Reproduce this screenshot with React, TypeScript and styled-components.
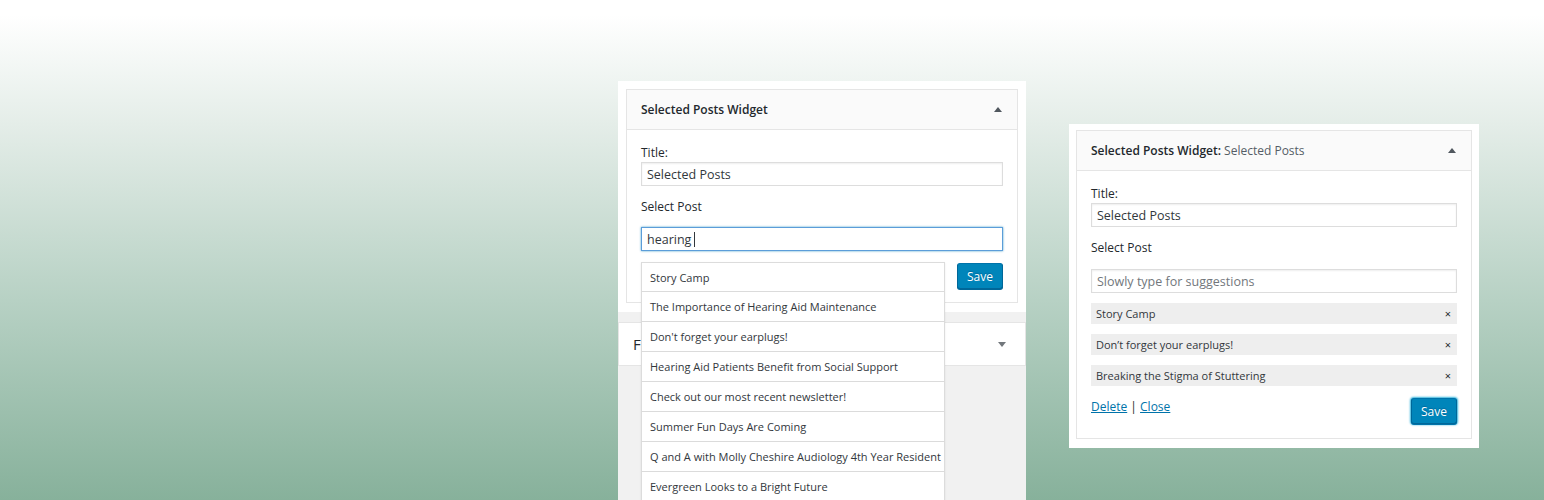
import React from "react";
import styled, { createGlobalStyle } from "styled-components";

const GlobalStyle = createGlobalStyle`
  html, body {
    margin: 0;
    padding: 0;
  }
  body {
    font-family: "Open Sans", "Liberation Sans", sans-serif;
    color: #23282d;
  }
`;

const Page = styled.div`
  width: 1544px;
  height: 500px;
  overflow: hidden;
  display: flex;
  align-items: flex-start;
  padding-left: 618px;
  box-sizing: border-box;
  background: linear-gradient(to bottom, #ffffff 3%, #e4ede8 25%, #b7d1c4 60%, #87b19b 100%);
`;

const LeftColumn = styled.div`
  width: 408px;
  height: 419px;
  margin-top: 81px;
  background: #f1f1f1;
  display: flex;
  flex-direction: column;
  flex-shrink: 0;
`;

const Holder = styled.div<{ $pad: string }>`
  background: #fff;
  padding: ${(p) => p.$pad};
  box-sizing: border-box;
`;

const RightHolder = styled(Holder)`
  width: 410px;
  margin-left: 43px;
  margin-top: 124px;
  flex-shrink: 0;
`;

const Widget = styled.div`
  border: 1px solid #e5e5e5;
  background: #fff;
`;

const Header = styled.div`
  height: 39px;
  background: #fafafa;
  border-bottom: 1px solid #e5e5e5;
  display: flex;
  align-items: center;
  justify-content: space-between;
  padding: 0 15px 0 14px;
`;

const HeaderTitle = styled.div`
  font-size: 12px;
  font-weight: 600;
  color: #23282d;
`;

const HeaderSub = styled.span`
  font-weight: 400;
  color: #555d66;
`;

const Arrow = styled.span<{ $down?: boolean }>`
  width: 0;
  height: 0;
  border-left: 4px solid transparent;
  border-right: 4px solid transparent;
  ${(p) => (p.$down ? "border-top: 5px solid #72777c;" : "border-bottom: 5px solid #50575e;")}
`;

const Body = styled.div<{ $pb: number }>`
  padding: 14px 14px ${(p) => p.$pb}px 14px;
  display: flex;
  flex-direction: column;
`;

const Label = styled.div<{ $mt?: number }>`
  font-size: 12px;
  line-height: 18px;
  color: #23282d;
  margin-top: ${(p) => p.$mt ?? 0}px;
`;

const Field = styled.div<{ $focus?: boolean; $mt?: number; $placeholder?: boolean }>`
  height: 24px;
  box-sizing: border-box;
  margin-top: ${(p) => p.$mt ?? 0}px;
  padding: 0 5px;
  display: flex;
  align-items: center;
  font-size: 12.5px;
  color: ${(p) => (p.$placeholder ? "#72777c" : "#32373c")};
  background: #fff;
  border: 1px solid ${(p) => (p.$focus ? "#5b9dd9" : "#ddd")};
  box-shadow: ${(p) =>
    p.$focus ? "0 0 2px rgba(30, 140, 190, 0.8)" : "inset 0 1px 2px rgba(0, 0, 0, 0.07)"};
`;

const Caret = styled.span`
  display: inline-block;
  width: 1px;
  height: 15px;
  background: #32373c;
  margin-left: 3px;
`;

const ActionRow = styled.div<{ $mt: number }>`
  margin-top: ${(p) => p.$mt}px;
  display: flex;
  justify-content: space-between;
  align-items: flex-start;
`;

const SuggestAnchor = styled.div`
  position: relative;
  width: 304px;
`;

const Suggestions = styled.ul`
  position: absolute;
  top: 0;
  left: 0;
  width: 304px;
  margin: 0;
  padding: 0;
  list-style: none;
  z-index: 5;
`;

const Suggestion = styled.li`
  height: 30px;
  box-sizing: border-box;
  padding: 0 8px;
  display: flex;
  align-items: center;
  white-space: nowrap;
  font-size: 11px;
  color: #32373c;
  background: #fff;
  border: 1px solid #dcdcdc;
  border-top: none;
  box-shadow: 0 1px 2px rgba(0, 0, 0, 0.08);
  &:first-child {
    border-top: 1px solid #dcdcdc;
  }
`;

const SaveButton = styled.button<{ $focus?: boolean; $mt?: number }>`
  height: 26px;
  margin-top: ${(p) => p.$mt ?? 0}px;
  padding: 0 9px;
  font-family: "Open Sans", "Liberation Sans", sans-serif;
  font-size: 12px;
  color: #fff;
  background: #0085ba;
  border: 1px solid #0073aa;
  border-color: #0073aa #006799 #006799;
  border-radius: 3px;
  box-shadow: ${(p) =>
    p.$focus ? "0 1px 0 #0073aa, 0 0 2px 1px #33b3db" : "0 1px 0 #006799"};
  text-shadow: 0 -1px 1px #006799;
`;

const SecondWidget = styled.div`
  margin-top: 10px;
  height: 44px;
  box-sizing: border-box;
  background: #fff;
  border: 1px solid #e5e5e5;
  display: flex;
  align-items: center;
  justify-content: space-between;
  padding: 0 19px 0 14px;
`;

const SecondTitle = styled.span`
  font-size: 15px;
  color: #23282d;
`;

const Chip = styled.div`
  height: 21px;
  margin-top: 10px;
  padding: 0 6px 0 5px;
  display: flex;
  align-items: center;
  justify-content: space-between;
  background: #eee;
  font-size: 11px;
  color: #32373c;
`;

const ChipRemove = styled.span`
  font-size: 11px;
  color: #23282d;
`;

const Footer = styled.div`
  margin-top: 12px;
  display: flex;
  justify-content: space-between;
  align-items: center;
`;

const Links = styled.div`
  font-size: 12px;
  color: #23282d;
  margin-top: -10px;
`;

const Link = styled.a`
  color: #0073aa;
  text-decoration: underline;
`;

const suggestions = [
  "Story Camp",
  "The Importance of Hearing Aid Maintenance",
  "Don't forget your earplugs!",
  "Hearing Aid Patients Benefit from Social Support",
  "Check out our most recent newsletter!",
  "Summer Fun Days Are Coming",
  "Q and A with Molly Cheshire Audiology 4th Year Resident",
  "Evergreen Looks to a Bright Future",
];

const selected = ["Story Camp", "Don\u2019t forget your earplugs!", "Breaking the Stigma of Stuttering"];

export default function App() {
  return (
    <>
      <GlobalStyle />
      <Page>
        <LeftColumn>
          <Holder $pad="8px 8px 9px">
            <Widget>
              <Header>
                <HeaderTitle>Selected Posts Widget</HeaderTitle>
                <Arrow />
              </Header>
              <Body $pb={13}>
                <Label>Title:</Label>
                <Field>Selected Posts</Field>
                <Label $mt={12}>Select Post</Label>
                <Field $focus $mt={11}>
                  hearing
                  <Caret />
                </Field>
                <ActionRow $mt={11}>
                  <SuggestAnchor>
                    <Suggestions>
                      {suggestions.map((s) => (
                        <Suggestion key={s}>{s}</Suggestion>
                      ))}
                    </Suggestions>
                  </SuggestAnchor>
                  <SaveButton $mt={1}>Save</SaveButton>
                </ActionRow>
              </Body>
            </Widget>
          </Holder>
          <SecondWidget>
            <SecondTitle>F</SecondTitle>
            <Arrow $down />
          </SecondWidget>
        </LeftColumn>

        <RightHolder $pad="6px 7px 9px 7px">
          <Widget>
            <Header>
              <HeaderTitle>
                Selected Posts Widget: <HeaderSub>Selected Posts</HeaderSub>
              </HeaderTitle>
              <Arrow />
            </Header>
            <Body $pb={14}>
              <Label>Title:</Label>
              <Field>Selected Posts</Field>
              <Label $mt={12}>Select Post</Label>
              <Field $placeholder $mt={12}>
                Slowly type for suggestions
              </Field>
              {selected.map((s) => (
                <Chip key={s}>
                  {s}
                  <ChipRemove>×</ChipRemove>
                </Chip>
              ))}
              <Footer>
                <Links>
                  <Link>Delete</Link> | <Link>Close</Link>
                </Links>
                <SaveButton $focus>Save</SaveButton>
              </Footer>
            </Body>
          </Widget>
        </RightHolder>
      </Page>
    </>
  );
}
